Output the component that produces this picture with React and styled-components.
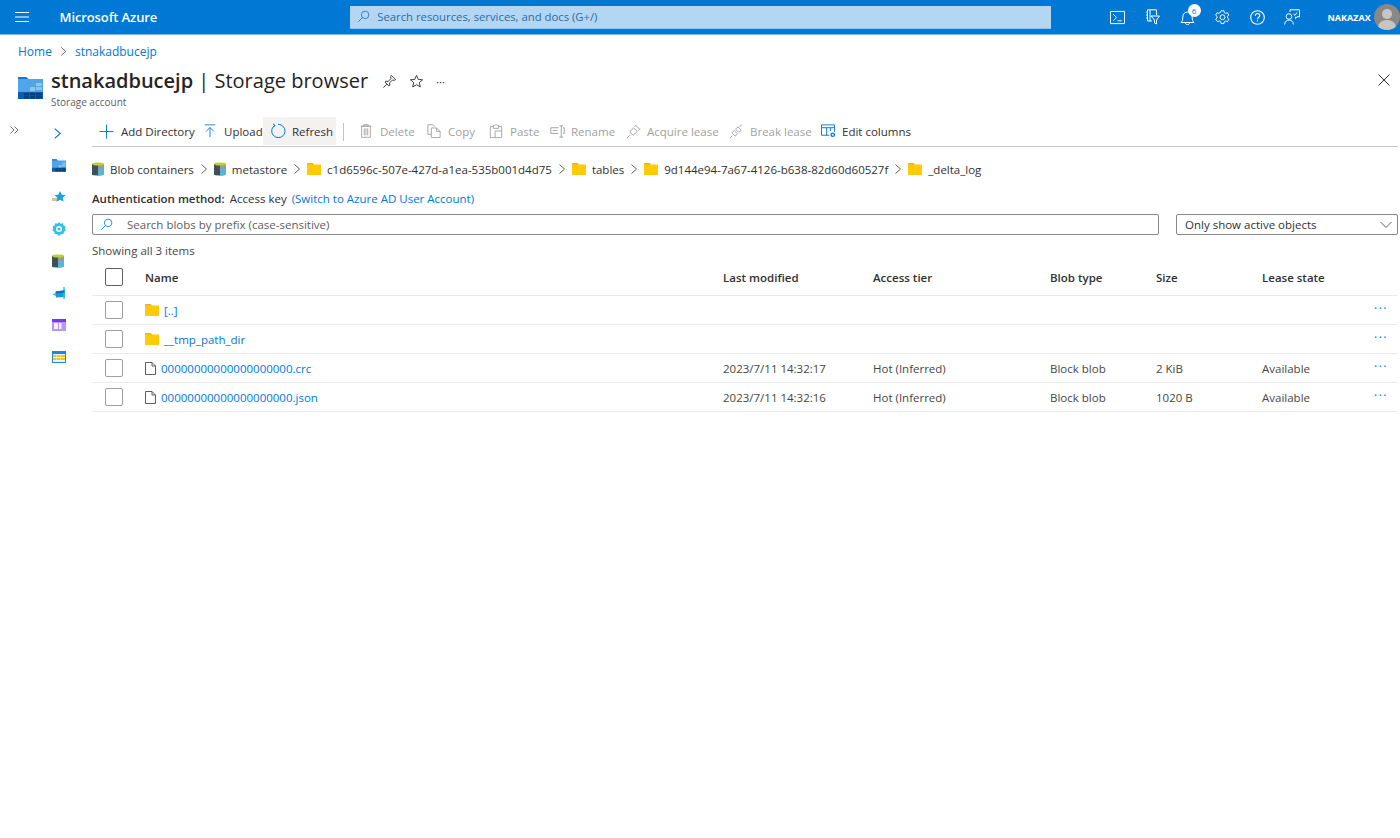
import React from 'react'
import styled, { createGlobalStyle } from 'styled-components'

const GlobalStyle = createGlobalStyle`
  html, body {
    margin: 0;
    height: 100%;
    background: #fff;
    overflow: hidden;
  }
  body {
    font-family: "Open Sans", "Noto Sans", "Liberation Sans", sans-serif;
    font-size: 11.5px;
    color: #323130;
  }
  * { box-sizing: border-box; }
`

const Page = styled.div`
  width: 1400px;
  height: 838px;
  overflow: hidden;
`

const TopBar = styled.header`
  height: 35px;
  background: #0078d4;
  display: flex;
  align-items: center;
  color: #fff;
  border-bottom: 1px solid #7cb9ea;
`

const MenuButton = styled.div`
  width: 60px;
  padding-left: 15px;
  display: flex;
`

const Brand = styled.div`
  width: 294px;
  font-size: 13px;
  font-weight: 600;
  letter-spacing: -0.1px;
`

const SearchBox = styled.div`
  width: 708px;
  height: 23px;
  background: #b3d6f2;
  display: flex;
  align-items: center;
  gap: 7px;
  padding-left: 7px;
  color: #2a6da8;
  font-size: 11.3px;
  border-bottom: 1px solid #8fc2ec;
`

const TopIcons = styled.div`
  margin-left: 56px;
  display: flex;
  align-items: center;
  gap: 14px;
`

const TopIcon = styled.div`
  width: 21px;
  height: 21px;
  position: relative;
  display: flex;
  align-items: center;
  justify-content: center;
`

const Badge = styled.span`
  position: absolute;
  top: -3px;
  right: -3px;
  width: 13px;
  height: 13px;
  border-radius: 50%;
  background: #fff;
  color: #0078d4;
  font-size: 8px;
  line-height: 13px;
  text-align: center;
`

const UserName = styled.div`
  margin-left: 25px;
  font-size: 9px;
  font-weight: 700;
  width: 47px;
`

const Avatar = styled.div`
  width: 26px;
  height: 26px;
  border-radius: 50%;
  margin-left: 0;
  flex: none;
  background: #8a8886;
  position: relative;
  overflow: hidden;
  &::before {
    content: '';
    position: absolute;
    left: 8px;
    top: 5px;
    width: 10px;
    height: 10px;
    border-radius: 50%;
    background: #c8c6c4;
  }
  &::after {
    content: '';
    position: absolute;
    left: 4px;
    top: 16px;
    width: 18px;
    height: 14px;
    border-radius: 50%;
    background: #c8c6c4;
  }
`

const Crumbs = styled.nav`
  height: 32px;
  padding: 1px 0 0 18px;
  display: flex;
  align-items: center;
  gap: 7px;
  font-size: 12px;
  color: #0078d4;
`

const TitleRow = styled.div`
  height: 50px;
  display: flex;
  padding-left: 18px;
  position: relative;
`

const TitleIcon = styled.div`
  width: 33px;
  padding-top: 10px;
`

const TitleText = styled.div`
  width: 318px;
`

const Title = styled.h1`
  margin: 0;
  font-size: 20px;
  line-height: 28px;
  font-weight: 400;
  color: #252423;
  white-space: nowrap;
  b { font-weight: 600; }
`

const SubTitle = styled.div`
  font-size: 10px;
  line-height: 14px;
  color: #605e5c;
  margin-top: 0;
`

const TitleActions = styled.div`
  display: flex;
  align-items: center;
  gap: 12px;
  height: 28px;
  padding-left: 13px;
  color: #323130;
`

const CloseButton = styled.div`
  position: absolute;
  right: 10px;
  top: 7px;
  display: flex;
`

const Body = styled.div`
  display: flex;
  height: 700px;
`

const CollapseRail = styled.div`
  width: 49px;
  padding: 9px 0 0 10px;
  display: flex;
  align-items: flex-start;
`

const SideMenu = styled.div`
  width: 43px;
  padding-top: 0;
  display: flex;
  flex-direction: column;
`

const SideItem = styled.div`
  height: 32px;
  padding-left: 3px;
  display: flex;
  align-items: center;
  width: 24px;
`

const Main = styled.main`
  width: 1306px;
`

const Toolbar = styled.div`
  height: 30px;
  margin-top: 0;
  display: flex;
  align-items: stretch;
  border-bottom: 1px solid #c8c6c4;
`

const ToolButton = styled.div`
  display: flex;
  align-items: center;
  gap: ${p => p.$gap || 7}px;
  width: ${p => p.$w}px;
  padding-left: ${p => p.$pad || 0}px;
  height: 28px;
  white-space: nowrap;
  color: ${p => (p.$disabled ? '#a19f9d' : '#323130')};
  background: ${p => (p.$active ? '#f3f2f1' : 'transparent')};
`

const ToolDivider = styled.div`
  width: 1px;
  height: 18px;
  background: #c8c6c4;
  margin: 6px 15px 0 7px;
`

const PathBar = styled.div`
  height: 43px;
  display: flex;
  align-items: center;
  white-space: nowrap;
  padding-top: 1px;
`

const PathItem = styled.div`
  display: flex;
  align-items: center;
  gap: 6px;
  color: #323130;
`

const PathChevron = styled.div`
  width: 20px;
  display: flex;
  justify-content: center;
`

const AuthLine = styled.div`
  height: 16px;
  display: flex;
  gap: 5px;
  align-items: center;
  white-space: nowrap;
  b { font-weight: 600; }
  a { color: #0078d4; }
`

const FilterRow = styled.div`
  display: flex;
  justify-content: space-between;
  margin-top: 8px;
`

const FilterInput = styled.div`
  width: 1067px;
  height: 21px;
  border: 1px solid #8a8886;
  border-radius: 2px;
  display: flex;
  align-items: center;
  padding-left: 7px;
  gap: 14px;
  color: #605e5c;
`

const StateSelect = styled.div`
  width: 222px;
  height: 21px;
  border: 1px solid #8a8886;
  border-radius: 2px;
  display: flex;
  align-items: center;
  justify-content: space-between;
  padding: 0 5px 0 8px;
  color: #323130;
`

const CountLine = styled.div`
  height: 16px;
  margin-top: 8px;
  line-height: 16px;
  color: #484644;
`

const TableRow = styled.div`
  display: grid;
  grid-template-columns: 53px 578px 150px 177px 106px 106px 110px 1fr;
  align-items: center;
  height: ${p => (p.$head ? 37 : 29)}px;
  border-bottom: 1px solid #edebe9;
  padding-top: ${p => (p.$head ? 0 : 0)}px;
  font-weight: ${p => (p.$head ? 600 : 400)};
  color: ${p => (p.$head ? '#323130' : '#484644')};
`

const CheckBox = styled.div`
  width: 18px;
  height: 18px;
  margin-left: 13px;
  border: 1px solid ${p => (p.$head ? '#605e5c' : '#a19f9d')};
  border-radius: 2px;
`

const NameCell = styled.div`
  display: flex;
  align-items: center;
  gap: 5px;
  color: #0078d4;
`

const Dots = styled.div`
  color: #0078d4;
  text-align: right;
  padding-right: 10px;
  font-size: 12px;
  line-height: 8px;
  letter-spacing: 1.5px;
  margin-top: -3px;
`

// icons
const Line = ({ size = 16, color = 'currentColor', sw = 1, children }) => (
  <svg width={size} height={size} viewBox='0 0 16 16' fill='none' stroke={color} strokeWidth={sw}>
    {children}
  </svg>
)

const MenuIcon = () => (
  <svg width='14' height='12' viewBox='0 0 14 12' stroke='#fff' strokeWidth='1.1'>
    <path d='M0 1.5h14M0 6h14M0 10.5h14' />
  </svg>
)

const SearchGlass = ({ color = '#2a6da8' }) => (
  <Line size={13} color={color}>
    <circle cx='10' cy='6' r='4.6' />
    <path d='M6.5 9.5L1.5 14.5' />
  </Line>
)

const Chevron = ({ color = '#605e5c', size = 10 }) => (
  <svg width={size} height={size} viewBox='0 0 10 10' fill='none' stroke={color}>
    <path d='M2.5 0.5L7.5 5l-5 4.5' />
  </svg>
)

const Folder = ({ w = 14, h = 12 }) => (
  <svg width={w} height={h} viewBox='0 0 14 12'>
    <path d='M0 0h5.5l1.5 1.5H14V12H0z' fill='#ffcb05' />
    <path d='M0 0h5.5l1.5 1.5H0z' fill='#e8b33c' />
  </svg>
)

const FileIcon = () => (
  <svg width='11' height='13' viewBox='0 0 11 13' fill='#fff' stroke='#605e5c'>
    <path d='M0.5 0.5h6.5l3.5 3.5v8.5h-10z' />
    <path d='M7 0.5V4h3.5' fill='none' />
  </svg>
)

const ContainerIcon = () => (
  <svg width='12' height='14' viewBox='0 0 12 14'>
    <path d='M0 2h12v10.5a6 1.5 0 0 1-12 0z' fill='#59b4d9' />
    <path d='M0 2h6v11H0z' fill='#3e3e3e' opacity='.85' />
    <path d='M6 7h6v6H6z' fill='#59b4d9' />
    <path d='M6 2h6v5H6z' fill='#9a9a9a' />
    <ellipse cx='6' cy='2' rx='6' ry='1.6' fill='#b8d432' />
  </svg>
)

const StorageIcon = ({ w = 25, h = 22 }) => (
  <svg width={w} height={h} viewBox='0 0 25 22'>
    <path d='M0 0h8l2.5 2H25v20H0z' fill='#50a5e8' />
    <path d='M0 0h8l2.5 2H0z' fill='#1e78c8' />
    <path d='M0 15h25v7H0z' fill='#0f5da8' />
    <path d='M18 6h6v3h-6zM18 10h6v3h-6zM12 10h5v4h-5z' fill='#9ccdf2' opacity='.8' />
    <path d='M6 16h5v2.5H6zM12 16h5v2.5h-5zM18 16h6v2.5h-6zM6 19h5v2.5H6zM12 19h5v2.5h-5zM18 19h6v2.5h-6z' fill='#0a3f7d' />
  </svg>
)

const StarIcon = () => (
  <svg width='14' height='12' viewBox='0 0 14 12'>
    <path d='M0 7h7v3H0z' fill='#d8c68e' />
    <path d='M8 0l1.7 3.7 4 .4-3 2.7.9 4-3.6-2.1-3.6 2.1.9-4-3-2.7 4-.4z' fill='#1ea0dc' />
  </svg>
)

const GearBlue = () => (
  <svg width='14' height='14' viewBox='0 0 14 14'>
    <path d='M7 0l1.6 1.7 2.3-.5.6 2.3 2.2.8-.8 2.2 1 2-2 1.2-.4 2.3-2.3-.1L7 14l-2-2.1-2.3.1-.4-2.3-2-1.2 1-2-.8-2.2 2.2-.8.6-2.3 2.3.5z' fill='#32bfe8' />
    <circle cx='7' cy='7' r='3' fill='#fff' />
    <circle cx='7' cy='7' r='1.6' fill='#32bfe8' />
  </svg>
)

const QueueIcon = () => (
  <svg width='14' height='14' viewBox='0 0 14 14'>
    <path d='M0 8.5l4-1.5v3z' fill='#32bfe8' />
    <path d='M4 5.5l9-1.5v7l-9 .5z' fill='#1a9ad6' />
    <path d='M11 1h2v12h-2z' fill='#32bfe8' opacity='.75' />
    <path d='M3.5 5.5l9-1v2l-9 1z' fill='#0f6fb0' />
  </svg>
)

const ColumnsPurple = () => (
  <svg width='14' height='12' viewBox='0 0 14 12'>
    <path d='M0 0h14v12H0z' fill='#b796f9' />
    <path d='M0 0h14v3H0z' fill='#773adc' />
    <path d='M2 4h4v6H2zM7 4h2.5v6H7z' fill='#fff' opacity='.85' />
  </svg>
)

const TableIcon = () => (
  <svg width='14' height='12' viewBox='0 0 14 12'>
    <path d='M0 0h14v12H0z' fill='#1e88d8' />
    <path d='M1 3h12v8H1z' fill='#e8f3fc' />
    <path d='M1 4h3.5v2H1zM5 4h3.5v2H5zM9 4h4v2H9zM1 7h3.5v2H1zM5 7h3.5v2H5zM9 7h4v2H9z' fill='#f8c314' />
  </svg>
)

const Pin = () => (
  <Line size={15}>
    <path d='M10 1.5L14.5 6l-1.2.7-2.3-.2L8 9.5l.4 2.3-1 1L3.2 8.6l1-1 2.3.4 3-3-.2-2.3zM5.2 10.8L1.5 14.5' />
  </Line>
)

const Star = () => (
  <Line size={15}>
    <path d='M8 1.5l1.9 4.3 4.6.4-3.5 3 1.1 4.6L8 11.4l-4.1 2.4L5 9.2l-3.5-3 4.6-.4z' />
  </Line>
)

const Plus = () => (
  <Line size={15} color='#0078d4'>
    <path d='M8 0.5v15M0.5 8h15' />
  </Line>
)

const UploadIcon = () => (
  <Line size={14} color='#0078d4'>
    <path d='M2 1h12M8 15V4M3.5 8.5L8 4l4.5 4.5' />
  </Line>
)

const RefreshIcon = () => (
  <Line size={16} color='#0078d4'>
    <path d='M5 2.3A6.6 6.6 0 1 0 8 1.4M3 0.8l2.1 1.6-1.7 2' />
  </Line>
)

const TrashIcon = () => (
  <Line size={14} color='#a19f9d'>
    <path d='M2 2.5h12M5.5 2.5V.8h5v1.7M3 2.5h10v12.7H3zM6 5v8M8 5v8M10 5v8' />
  </Line>
)

const CopyIcon = () => (
  <Line size={14} color='#a19f9d'>
    <path d='M1 .8h6l2 2M1 .8v11h4M5 4.5h6l4 4v7H5zM11 4.5v4h4' />
  </Line>
)

const PasteIcon = () => (
  <Line size={14} color='#a19f9d'>
    <path d='M5 3H1.5v12.5h13V3H11M5 1.5h2l1-1 1 1h2V5H5zM7 8v7.5M7 8h7.5' />
  </Line>
)

const RenameIcon = () => (
  <Line size={15} color='#a19f9d'>
    <path d='M9 4H.8v6H9M12 2v12M10 2h4M10 14h4M14 4h1.2v6H14M3 7h5' />
  </Line>
)

const LeaseIcon = () => (
  <Line size={15} color='#a19f9d'>
    <path d='M1 15l3-3M4 8.5L7.5 12 12 8 8 4zM9 3L11 1M13 7L15 5M10.5 1.5l4 4' />
  </Line>
)

const BreakIcon = () => (
  <Line size={15} color='#a19f9d'>
    <path d='M1 15l2.5-2.5M3 9.5l3.5 3.5L9 10.5 5.5 7zM7 5.5L10.5 9 13 6.5 9.5 3zM11 3l3-2.5' />
  </Line>
)

const EditColumnsIcon = () => (
  <svg width='16' height='14' viewBox='0 0 16 14' fill='none' stroke='#0078d4'>
    <path d='M9 11.5H.5V.5h14V8M.5 3.5h14M6 3.5v8M10 3.5V7' />
    <circle cx='12.5' cy='11' r='1.8' strokeWidth='1.4' />
  </svg>
)

const ShellIcon = () => (
  <Line size={15} color='#fff'>
    <path d='M.5 1.5h15v13H.5zM3.5 4.5L7 8l-3.5 3.5M8 11.5h4.5' />
  </Line>
)

const FilterBook = () => (
  <svg width='15' height='16' viewBox='0 0 15 16' fill='none' stroke='#fff'>
    <path d='M7 12H2.5V.8h9V6M1 3h2M1 6h2M1 9h2M5 .8V12M6 7h8.5L11.5 11v4l-2-1v-3z' />
  </svg>
)

const BellIcon = () => (
  <svg width='15' height='15' viewBox='0 0 15 15' fill='none' stroke='#fff'>
    <path d='M.8 12.5c1.5-1 2-2.5 2-5.5 0-3 2-5 4.7-5s4.700 2 4.700 5c0 3 .5 4.500 2 5.500zM5.500 12.500c0 3 4 3 4 0' />
  </svg>
)

const GearIcon = () => (
  <Line size={15} color='#fff'>
    <path d='M6.500.8h3l.4 2 1.500.8 1.900-.7 1.500 2.600-1.500 1.300v1.700l1.500 1.300-1.500 2.600-1.900-.7-1.500.8-.4 2h-3l-.4-2-1.500-.8-1.900.7L.7 9.800l1.500-1.300V6.800L.7 5.500l1.500-2.600 1.900.7 1.500-.8z' />
    <circle cx='8' cy='7.700' r='2.600' />
  </Line>
)

const HelpIcon = () => (
  <svg width='15' height='15' viewBox='0 0 15 15' fill='none' stroke='#fff'>
    <circle cx='7.500' cy='7.500' r='6.800' strokeWidth='1.100' />
    <path d='M5.300 5.800c0-3 4.500-3 4.500-.2 0 1.700-2.300 1.700-2.300 3.600' strokeWidth='1.100' />
    <path d='M7.500 10.300v1.200' strokeWidth='1.200' />
  </svg>
)

const FeedbackIcon = () => (
  <svg width='16' height='16' viewBox='0 0 16 16' fill='none' stroke='#fff'>
    <path d='M6 3V.8h9.500v7H13l-1.500 1.700V7.800' />
    <circle cx='5' cy='7.500' r='2.800' />
    <path d='M.6 15.500c.3-6 8.500-6 8.800 0M9.500 5L11 6.300 13 3.500' />
  </svg>
)

const DownChevron = () => (
  <svg width='12' height='8' viewBox='0 0 12 8' fill='none' stroke='#605e5c'>
    <path d='M.5 1L6 6.500 11.500 1' />
  </svg>
)

const CloseIcon = () => (
  <svg width='12' height='12' viewBox='0 0 12 12' fill='none' stroke='#323130'>
    <path d='M.5.500l11 11M11.500.500l-11 11' />
  </svg>
)

const DoubleChevron = () => (
  <svg width='9' height='8' viewBox='0 0 9 8' fill='none' stroke='#605e5c' strokeWidth='.9'>
    <path d='M.5.500L4 4 .5 7.500M4.500.500L8 4 4.500 7.500' />
  </svg>
)

const tools = [
  { label: 'Add Directory', icon: <Plus />, w: 105, pad: 7 },
  { label: 'Upload', icon: <UploadIcon />, w: 66, pad: 6 },
  { label: 'Refresh', icon: <RefreshIcon />, w: 73, pad: 7, active: true, gap: 6 }
]

const disabledTools = [
  { label: 'Delete', icon: <TrashIcon />, w: 68 },
  { label: 'Copy', icon: <CopyIcon />, w: 62 },
  { label: 'Paste', icon: <PasteIcon />, w: 61 },
  { label: 'Rename', icon: <RenameIcon />, w: 76, gap: 6 },
  { label: 'Acquire lease', icon: <LeaseIcon />, w: 103, gap: 6 },
  { label: 'Break lease', icon: <BreakIcon />, w: 92, gap: 6 }
]

const pathParts = [
  { label: 'Blob containers', icon: <ContainerIcon /> },
  { label: 'metastore', icon: <ContainerIcon /> },
  { label: 'c1d6596c-507e-427d-a1ea-535b001d4d75', icon: <Folder /> },
  { label: 'tables', icon: <Folder /> },
  { label: '9d144e94-7a67-4126-b638-82d60d60527f', icon: <Folder /> },
  { label: '_delta_log', icon: <Folder /> }
]

const rows = [
  { name: '[..]', folder: true },
  { name: '__tmp_path_dir', folder: true },
  { name: '00000000000000000000.crc', modified: '2023/7/11 14:32:17', tier: 'Hot (Inferred)', type: 'Block blob', size: '2 KiB', lease: 'Available' },
  { name: '00000000000000000000.json', modified: '2023/7/11 14:32:16', tier: 'Hot (Inferred)', type: 'Block blob', size: '1020 B', lease: 'Available' }
]

const sideIcons = [<StorageIcon w={14} h={13} />, <StarIcon />, <GearBlue />, <ContainerIcon />, <QueueIcon />, <ColumnsPurple />, <TableIcon />]

export default function App () {
  return (
    <Page>
      <GlobalStyle />
      <TopBar>
        <MenuButton><MenuIcon /></MenuButton>
        <Brand>Microsoft Azure</Brand>
        <SearchBox>
          <SearchGlass />
          <span>Search resources, services, and docs (G+/)</span>
        </SearchBox>
        <TopIcons>
          <TopIcon><ShellIcon /></TopIcon>
          <TopIcon><FilterBook /></TopIcon>
          <TopIcon><BellIcon /><Badge>6</Badge></TopIcon>
          <TopIcon><GearIcon /></TopIcon>
          <TopIcon><HelpIcon /></TopIcon>
          <TopIcon><FeedbackIcon /></TopIcon>
        </TopIcons>
        <UserName>NAKAZAX</UserName>
        <Avatar />
      </TopBar>

      <Crumbs>
        <span>Home</span>
        <Chevron color='#605e5c' size={9} />
        <span>stnakadbucejp</span>
      </Crumbs>

      <TitleRow>
        <TitleIcon><StorageIcon /></TitleIcon>
        <TitleText>
          <Title><b>stnakadbucejp</b> | Storage browser</Title>
          <SubTitle>Storage account</SubTitle>
        </TitleText>
        <TitleActions>
          <Pin />
          <Star />
          <span>···</span>
        </TitleActions>
        <CloseButton><CloseIcon /></CloseButton>
      </TitleRow>

      <Body>
        <CollapseRail><DoubleChevron /></CollapseRail>
        <SideMenu>
          <SideItem>
            <Chevron color='#0078d4' size={11} />
          </SideItem>
          {sideIcons.map((icon, i) => <SideItem key={i}>{icon}</SideItem>)}
        </SideMenu>

        <Main>
          <Toolbar>
            {tools.map(t => (
              <ToolButton key={t.label} $w={t.w} $pad={t.pad} $gap={t.gap} $active={t.active}>
                {t.icon}<span>{t.label}</span>
              </ToolButton>
            ))}
            <ToolDivider />
            {disabledTools.map(t => (
              <ToolButton key={t.label} $w={t.w} $gap={t.gap} $disabled>
                {t.icon}<span>{t.label}</span>
              </ToolButton>
            ))}
            <ToolButton $w={90} $gap={6}><EditColumnsIcon /><span>Edit columns</span></ToolButton>
          </Toolbar>

          <PathBar>
            {pathParts.map((p, i) => (
              <React.Fragment key={p.label}>
                {i > 0 && <PathChevron><Chevron /></PathChevron>}
                <PathItem>{p.icon}<span>{p.label}</span></PathItem>
              </React.Fragment>
            ))}
          </PathBar>

          <AuthLine>
            <b>Authentication method:</b>
            <span>Access key</span>
            <a>(Switch to Azure AD User Account)</a>
          </AuthLine>

          <FilterRow>
            <FilterInput>
              <SearchGlass color='#0078d4' />
              <span>Search blobs by prefix (case-sensitive)</span>
            </FilterInput>
            <StateSelect>
              <span>Only show active objects</span>
              <DownChevron />
            </StateSelect>
          </FilterRow>

          <CountLine>Showing all 3 items</CountLine>

          <TableRow $head>
            <CheckBox $head />
            <div>Name</div>
            <div>Last modified</div>
            <div>Access tier</div>
            <div>Blob type</div>
            <div>Size</div>
            <div>Lease state</div>
            <div />
          </TableRow>
          {rows.map(r => (
            <TableRow key={r.name}>
              <CheckBox />
              <NameCell>
                {r.folder ? <Folder w={14} h={12} /> : <FileIcon />}
                <span>{r.name}</span>
              </NameCell>
              <div>{r.modified}</div>
              <div>{r.tier}</div>
              <div>{r.type}</div>
              <div>{r.size}</div>
              <div>{r.lease}</div>
              <Dots>···</Dots>
            </TableRow>
          ))}
        </Main>
      </Body>
    </Page>
  )
}
